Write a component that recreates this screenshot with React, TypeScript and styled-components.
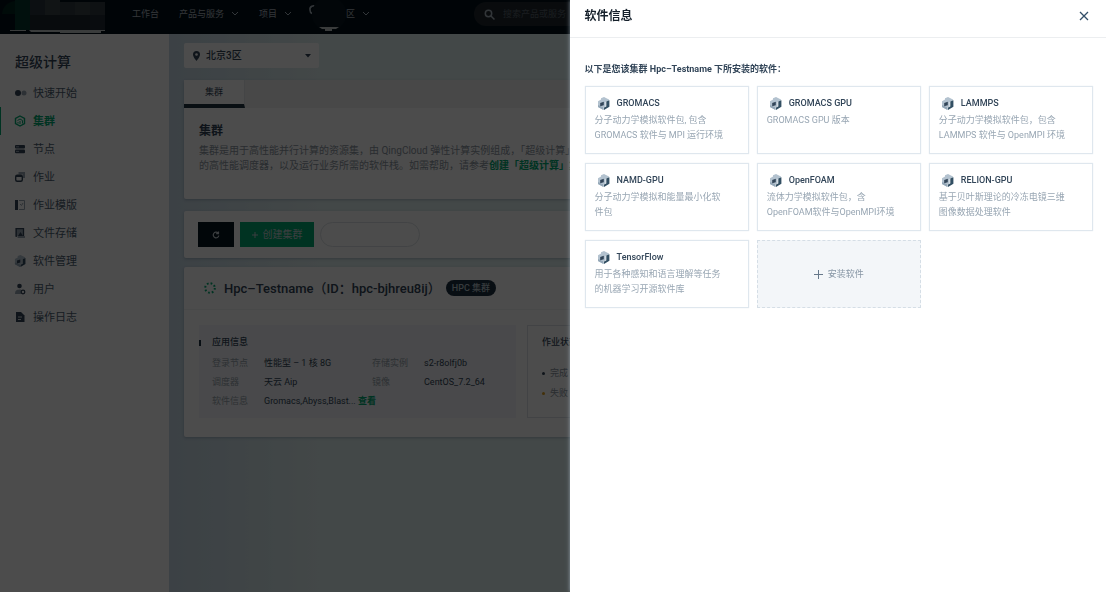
import React from "react";
import styled, { createGlobalStyle, css } from "styled-components";

const Global = createGlobalStyle`
  * { box-sizing: border-box; }
  html, body, #root { height: 100%; }
  body { margin: 0; overflow: hidden; font-family: Roboto, "Noto Sans CJK SC", sans-serif; font-size: 9px; line-height: 15px; color: #324558; }
  h1, h2, h3, p, ul, dl, dd { margin: 0; padding: 0; }
  ul { list-style: none; }
  a { color: inherit; text-decoration: none; }
  button, input, select { font: inherit; color: inherit; }
  button { cursor: pointer; border: 0; padding: 0; background: none; }
  svg { display: block; flex: none; overflow: visible; }
`;

const Page = styled.div`
  min-height: 100vh;
  display: flex;
  flex-direction: column;
  background: #fff;
`;

const TopBar = styled.header`
  height: 34px;
  display: flex;
  align-items: flex-start;
  background: #03101a;
  color: #a9b4be;
`;

const TopNav = styled.nav`
  display: flex;
  align-items: center;
  gap: 20px;
  height: 28px;
  margin-left: 12px;
`;

const TopLink = styled.a`
  display: flex;
  align-items: center;
  gap: 7px;
  white-space: nowrap;
`;

const SearchBox = styled.label`
  display: flex;
  align-items: center;
  gap: 8px;
  width: 220px;
  height: 24px;
  margin: 2px 0 0 104px;
  padding: 0 10px;
  border-radius: 12px;
  background: #1f272e;
`;

const SearchInput = styled.input`
  flex: 1;
  min-width: 0;
  border: 0;
  padding: 0;
  outline: 0;
  background: none;
  &::placeholder { color: #58626b; opacity: 1; }
`;

const Body = styled.div`
  flex: 1;
  display: flex;
`;

const Sidebar = styled.aside`
  width: 169px;
  flex: none;
  padding-top: 17px;
`;

const SideTitle = styled.h1`
  padding: 0 15px;
  font-size: 14px;
  line-height: 22px;
  font-weight: 500;
  color: #324558;
  margin-bottom: 6px;
`;

const SideLink = styled.a<{ $active?: boolean }>`
  display: flex;
  align-items: center;
  gap: 7px;
  height: 28px;
  padding-left: 13px;
  border-left: 1px solid ${p => (p.$active ? "#00aa72" : "transparent")};
  font-size: 11px;
  color: ${p => (p.$active ? "#00aa72" : "#4c5e70")};
  font-weight: ${p => (p.$active ? 700 : 400)};
`;

const Main = styled.main`
  flex: 1;
  min-width: 0;
  padding: 9px 15px;
  background: linear-gradient(90deg, #c8dae6 0, #e0f0f0 16%, #e0f0f0 100%);
  display: flex;
  flex-direction: column;
`;

const ZonePicker = styled.label`
  display: flex;
  align-items: center;
  gap: 5px;
  width: 135px;
  height: 25px;
  padding: 0 8px;
  margin-bottom: 12px;
  background: #fff;
  border-radius: 2px;
`;

const ZoneSelect = styled.select`
  flex: 1;
  appearance: none;
  border: 0;
  padding: 0;
  background: none;
  font-size: 10px;
  font-weight: 500;
`;

const Card = styled.section`
  background: #fff;
  border-radius: 2px;
  box-shadow: 0 1px 3px rgba(50, 80, 110, 0.3);
`;

const IntroCard = styled(Card)`
  height: 119px;
  margin-bottom: 12px;
`;

const TabBar = styled.div`
  display: flex;
  height: 28px;
  background: #f0f0f0;
`;

const Tab = styled.button`
  width: 61px;
  background: #fff;
  border-bottom: 4px solid #1f3442;
  border-right: 1px solid #e4e8ea;
`;

const Intro = styled.div`
  padding: 14px 15px;
`;

const IntroTitle = styled.h2`
  font-size: 12px;
  line-height: 18px;
  font-weight: 700;
  margin-bottom: 3px;
`;

const IntroText = styled.p`
  font-size: 10px;
  line-height: 15px;
  color: #8b96a0;
  white-space: nowrap;
  overflow: hidden;
  a { color: #00aa72; font-weight: 700; }
`;

const Toolbar = styled(Card)`
  display: flex;
  align-items: center;
  gap: 6px;
  height: 47px;
  padding: 0 14px;
  margin-bottom: 9px;
`;

const ToolButton = styled.button<{ $primary?: boolean }>`
  display: flex;
  align-items: center;
  justify-content: center;
  gap: 5px;
  height: 25px;
  font-size: 10px;
  width: ${p => (p.$primary ? 74 : 36)}px;
  background: ${p => (p.$primary ? "#00aa72" : "#06151f")};
  color: #c5d0d5;
`;

const FilterInput = styled.input`
  width: 100px;
  height: 25px;
  border: 1px solid #dde2e6;
  border-radius: 13px;
  padding: 0 10px;
  background: #fff;
`;

const ClusterCard = styled(Card)`
  height: 170px;
`;

const ClusterHead = styled.header`
  display: flex;
  align-items: center;
  height: 43px;
  padding-left: 20px;
  border-bottom: 1px solid #f2f4f6;
`;

const ClusterName = styled.h3`
  margin-left: 8px;
  font-size: 13px;
  font-weight: 500;
  white-space: nowrap;
`;

const Badge = styled.span`
  margin-left: 5px;
  padding: 0 6px;
  border-radius: 8px;
  background: #1c2f40;
  color: #b9c5cd;
  font-weight: 500;
  line-height: 16px;
  white-space: nowrap;
`;

const Panels = styled.div`
  display: grid;
  grid-template-columns: 317px 1fr;
  gap: 11px;
  padding: 15px;
`;

const InfoPanel = styled.div`
  height: 93px;
  padding: 10px 0 0 13px;
  background: #f3f6fa;
`;

const PanelTitle = styled.h4<{ $marked?: boolean }>`
  display: flex;
  align-items: center;
  margin: 0 0 4px;
  font-size: 9px;
  font-weight: 500;
  ${p => p.$marked && css`
    margin-left: -13px;
    &::before { content: ""; width: 2px; height: 6px; margin-right: 11px; background: #1c2f40; }
  `}
`;

const Facts = styled.dl`
  display: grid;
  grid-template-columns: 52px 108px 52px 1fr;
  grid-auto-rows: 19px;
  align-items: center;
  white-space: nowrap;
  dt { color: #98a3ad; }
  dd { color: #324558; }
  a { color: #00aa72; font-weight: 700; }
`;

const JobPanel = styled.div`
  padding: 9px 14px 0;
  border: 1px solid #dde2e8;
`;

const JobLine = styled.li<{ $color: string }>`
  display: flex;
  align-items: center;
  gap: 5px;
  height: 20px;
  color: #8b96a0;
  &::before { content: ""; width: 3px; height: 3px; border-radius: 50%; background: ${p => p.$color}; }
`;

const JobList = styled.ul`
  padding-top: 9px;
`;

const Mask = styled.div`
  position: fixed;
  inset: 0;
  background: rgba(0, 0, 0, 0.7);
`;

const Drawer = styled.aside`
  position: fixed;
  top: 0;
  right: 0;
  bottom: 0;
  left: 51.5%;
  background: #fff;
  box-shadow: 0 0 4px rgba(180, 200, 215, 0.7);
`;

const DrawerHead = styled.header`
  display: flex;
  align-items: center;
  justify-content: space-between;
  height: 38px;
  padding: 0 17px 5px 15px;
  border-bottom: 1px solid #eceef0;
`;

const DrawerTitle = styled.h2`
  font-size: 12px;
  font-weight: 700;
  line-height: 18px;
  color: #15202b;
`;

const DrawerBody = styled.div`
  padding: 23px 13px 0 15px;
`;

const Lead = styled.p`
  font-weight: 700;
  line-height: 16px;
  margin-bottom: 9px;
`;

const Grid = styled.div`
  display: grid;
  grid-template-columns: repeat(3, 1fr);
  grid-auto-rows: 68px;
  gap: 9px 8px;
`;

const Software = styled.article`
  padding: 8px 9px 0;
  border: 1px solid #dfe7ee;
  box-shadow: 0 0 1px #dfe7ee;
`;

const SoftwareName = styled.h3`
  display: flex;
  align-items: center;
  gap: 7px;
  padding-left: 2px;
  margin-bottom: 1px;
  line-height: 17px;
  font-size: 9px;
  font-weight: 500;
  color: #324558;
`;

const SoftwareText = styled.p`
  color: #98a6b3;
  white-space: pre-line;
`;

const InstallButton = styled.button`
  display: flex;
  align-items: center;
  justify-content: center;
  gap: 5px;
  border: 1px dashed #d5dee6;
  background: #f3f6f9;
  color: #8796a5;
`;

const Chevron = () => (
  <svg width="8" height="6" viewBox="0 0 8 6" fill="none" stroke="currentColor"><path d="M1 1l3 3 3-3" /></svg>
);

const Cube = ({ size = 13 }: { size?: number }) => (
  <svg width={size} height={size} viewBox="0 0 13 13">
    <path d="M1 4.200L4 2.600V1.200L7 0l5 2.400v1L8.600 5v4.600L6.500 10.500V13L1 10z" fill="#b3c2cf" />
    <path d="M1 8l5.500 2.500V13L1 10z" fill="#94a7b7" />
    <path d="M3.200 6L6.800 4.800v3.400L3.200 9.200z" fill="#324558" />
    <path d="M9.300 4.600L12.400 3.200v6.600L7 13v-2.400l2.300-1.100z" fill="#324f63" />
  </svg>
);

const dark = "#324558";
const pale = "#98a6b3";
const sideIcons: Record<string, React.ReactNode> = {
  start: <><circle cx="10" cy="6" r="2.500" fill={pale} /><circle cx="4" cy="6" r="3" fill={dark} /></>,
  cluster: <><path d="M6 1l4.500 2.500v5L6 11 1.500 8.500v-5z" fill="none" stroke="#00aa72" strokeWidth="1.400" /><path d="M3.500 5.500L6 4l2.500 1.500v3M6 6v3M4 7v1.500" fill="none" stroke="#00aa72" /></>,
  node: <><rect x="1" y="2" width="10" height="3.600" rx="1" fill={dark} /><rect x="1" y="6.600" width="10" height="3.600" rx="1" fill={dark} /><path d="M2 3.800h3M2 8.400h3" stroke={pale} /></>,
  job: <><path d="M4.500 1h6.500v6H9V3.500H4.500z" fill={pale} /><rect x="1.700" y="4.200" width="6.600" height="6" rx="1.500" fill="none" stroke={dark} strokeWidth="1.400" /><path d="M2 5h6" stroke={dark} strokeWidth="2" /></>,
  template: <><rect x="1" y="1" width="3" height="10" fill={dark} /><path d="M5 1.500h5.500v9H5M6 5l1.500 1.500L9 4" fill="none" stroke={pale} /></>,
  files: <><path d="M1.500 1H9.500v8H11v2H3.500V9h-2z" fill={pale} /><path d="M2.200 10V1.700h7.300V9" fill="none" stroke={dark} strokeWidth="1.300" /><path d="M4 9l2.500-4L9 9z" fill={dark} /></>,
  user: <><circle cx="5.500" cy="3" r="2.300" fill={dark} /><path d="M1 11c0-4 2-4.500 6-4.500V11z" fill={pale} /><circle cx="9" cy="9" r="1.800" fill="#fff" stroke={dark} strokeWidth="1.300" /></>,
  log: <><path d="M2 1h5l3.500 3.500V11H2z" fill={dark} /><path d="M4 6h4M4 8.500h3" stroke="#fff" strokeWidth=".8" /></>,
};

const sideItems: [string, string][] = [
  ["start", "快速开始"], ["cluster", "集群"], ["node", "节点"], ["job", "作业"], ["template", "作业模版"],
  ["files", "文件存储"], ["cube", "软件管理"], ["user", "用户"], ["log", "操作日志"],
];

const software: [string, string][] = [
  ["GROMACS", "分子动力学模拟软件包, 包含\nGROMACS 软件与 MPI 运行环境"],
  ["GROMACS GPU", "GROMACS GPU 版本"],
  ["LAMMPS", "分子动力学模拟软件包，包含\nLAMMPS 软件与 OpenMPI 环境"],
  ["NAMD-GPU", "分子动力学模拟和能量最小化软\n件包"],
  ["OpenFOAM", "流体力学模拟软件包，含\nOpenFOAM软件与OpenMPI环境"],
  ["RELION-GPU", "基于贝叶斯理论的冷冻电镜三维\n图像数据处理软件"],
  ["TensorFlow", "用于各种感知和语言理解等任务\n的机器学习开源软件库"],
];

const Logo = () => (
  <svg width="120" height="34" viewBox="0 0 120 34">
    <path d="M2 14A14 14 0 0 1 15 1v13z" fill="#03251f" />
    <path d="M15 0h15v30H15z" fill="#04382c" />
    <path d="M30 0h30v15H30z" fill="#2b353e" />
    <path d="M45 0h15v15H45zM75 2h15v13H75z" fill="#3a4348" />
    <path d="M60 2h15v13H60zM90 2h15v13H90z" fill="#303a40" />
    <path d="M30 15h60v15H30z" fill="#1b262e" />
    <path d="M90 15h15v15H90z" fill="#1f2a32" />
    <path d="M10 30h16v1H10zM29 30h76v1h-4v2H60v-1H31z" fill="#c4c8ca" />
  </svg>
);

const RegionMark = () => (
  <svg width="27" height="34" viewBox="0 0 27 34">
    <path d="M4 10a3.500 3.500 0 0 0-6 3c0 2 1 3 2 3.500" fill="none" stroke="#a9b4be" strokeWidth="1.600" />
    <circle cx="17" cy="17" r="17" fill="#071720" />
    <path d="M7 30h20l-3 2h-4v2h-7v-2h-3z" fill="#c4c8ca" />
  </svg>
);

export default function App() {
  return (
    <>
      <Global />
      <Page>
        <TopBar>
          <Logo />
          <TopNav aria-label="主导航">
            <TopLink href="#">工作台</TopLink>
            <TopLink href="#">产品与服务 <Chevron /></TopLink>
            <TopLink href="#">项目 <Chevron /></TopLink>
            <TopLink href="#"><RegionMark />区 <Chevron /></TopLink>
          </TopNav>
          <SearchBox>
            <svg width="11" height="11" viewBox="0 0 11 11" fill="none" stroke="currentColor" strokeWidth="1.500"><circle cx="4.500" cy="4.500" r="3.200" /><path d="M7 7l3.500 3.500" /></svg>
            <SearchInput placeholder="搜索产品或服务" aria-label="搜索" />
          </SearchBox>
        </TopBar>
        <Body>
          <Sidebar>
            <SideTitle>超级计算</SideTitle>
            <ul>
              {sideItems.map(([icon, label]) => (
                <li key={icon}>
                  <SideLink href="#" $active={icon === "cluster"}>
                    {icon === "cube" ? <Cube size={12} /> : <svg width="12" height="12" viewBox="0 0 12 12">{sideIcons[icon]}</svg>}
                    {label}
                  </SideLink>
                </li>
              ))}
            </ul>
          </Sidebar>
          <Main>
            <ZonePicker>
              <svg width="9" height="10" viewBox="0 0 9 10"><path d="M4.500 0a3.500 3.500 0 0 0-3.500 3.500C1 6 4.500 10 4.500 10S8 6 8 3.500A3.500 3.500 0 0 0 4.500 0z" fill={dark} /><circle cx="4.500" cy="3.500" r="1.300" fill="#fff" /></svg>
              <ZoneSelect aria-label="区域"><option>北京3区</option></ZoneSelect>
              <svg width="6" height="4" viewBox="0 0 6 4"><path d="M0 0h6L3 3.500z" fill={dark} /></svg>
            </ZonePicker>
            <IntroCard>
              <TabBar><Tab>集群</Tab></TabBar>
              <Intro>
                <IntroTitle>集群</IntroTitle>
                <IntroText>集群是用于高性能并行计算的资源集，由 QingCloud 弹性计算实例组成，「超级计算」<br />的高性能调度器，以及运行业务所需的软件栈。如需帮助，请参考<a href="#">创建「超级计算」集群</a></IntroText>
              </Intro>
            </IntroCard>
            <Toolbar>
              <ToolButton aria-label="刷新">
                <svg width="8" height="8" viewBox="0 0 8 8" fill="none" stroke="currentColor" strokeWidth="1.200"><path d="M6 2A2.800 2.800 0 1 0 6.800 4.500M6.500.5v2.200H4.200" /></svg>
              </ToolButton>
              <ToolButton $primary>
                <svg width="6" height="6" viewBox="0 0 6 6" stroke="currentColor"><path d="M0 3h6M3 0v6" /></svg>
                创建集群
              </ToolButton>
              <FilterInput aria-label="筛选集群" />
            </Toolbar>
            <ClusterCard>
              <ClusterHead>
                <svg width="12" height="12" viewBox="0 0 12 12" fill="none" stroke="#00aa72" strokeWidth="2"><circle cx="6" cy="6" r="4.800" strokeDasharray="1.770 2" /></svg>
                <ClusterName>Hpc–Testname（ID：hpc-bjhreu8ij）</ClusterName>
                <Badge>HPC 集群</Badge>
              </ClusterHead>
              <Panels>
                <InfoPanel>
                  <PanelTitle $marked>应用信息</PanelTitle>
                  <Facts>
                    <dt>登录节点</dt><dd>性能型 – 1 核 8G</dd><dt>存储实例</dt><dd>s2-r8olfj0b</dd>
                    <dt>调度器</dt><dd>天云 Aip</dd><dt>镜像</dt><dd>CentOS_7.2_64</dd>
                    <dt>软件信息</dt><dd>Gromacs,Abyss,Blast... <a href="#">查看</a></dd>
                  </Facts>
                </InfoPanel>
                <JobPanel>
                  <PanelTitle>作业状态</PanelTitle>
                  <JobList>
                    <JobLine $color="#324558">完成</JobLine>
                    <JobLine $color="#e0a020">失败</JobLine>
                  </JobList>
                </JobPanel>
              </Panels>
            </ClusterCard>
          </Main>
        </Body>
      </Page>
      <Mask />
      <Drawer role="dialog" aria-label="软件信息">
        <DrawerHead>
          <DrawerTitle>软件信息</DrawerTitle>
          <button aria-label="关闭">
            <svg width="10" height="10" viewBox="0 0 10 10" stroke="#324f68" strokeWidth="1.300"><path d="M1 1l8 8M9 1L1 9" /></svg>
          </button>
        </DrawerHead>
        <DrawerBody>
          <Lead>以下是您该集群 Hpc–Testname 下所安装的软件：</Lead>
          <Grid>
            {software.map(([name, text]) => (
              <Software key={name}>
                <SoftwareName><Cube />{name}</SoftwareName>
                <SoftwareText>{text}</SoftwareText>
              </Software>
            ))}
            <InstallButton>
              <svg width="9" height="9" viewBox="0 0 9 9" stroke="#66788a"><path d="M0 4.500h9M4.500 0v9" /></svg>
              安装软件
            </InstallButton>
          </Grid>
        </DrawerBody>
      </Drawer>
    </>
  );
}
